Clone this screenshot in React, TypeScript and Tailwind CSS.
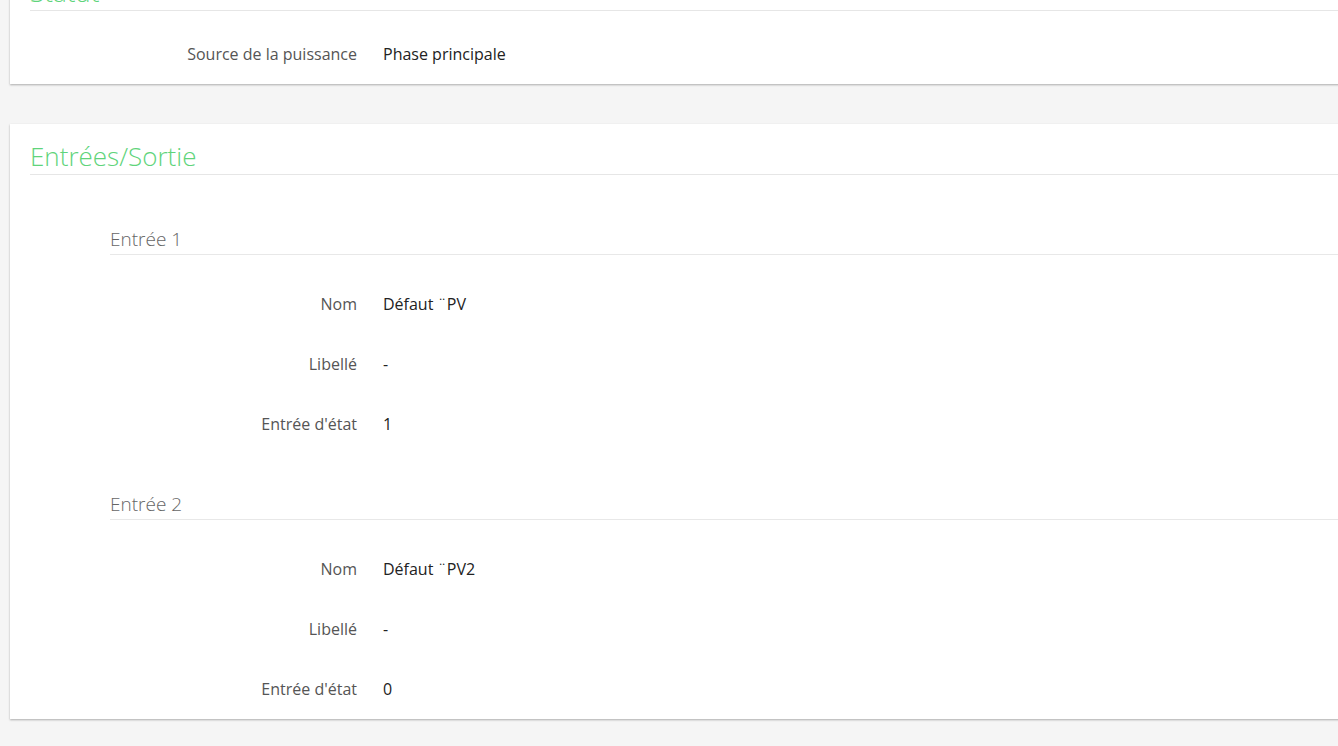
import React from "react";

const font = { fontFamily: "'Open Sans', 'Noto Sans', 'Liberation Sans', sans-serif" };

function Section({ title, rows }: { title: string; rows: [string, string][] }) {
  return (
    <div className="ml-[80px]">
      <div className="border-b border-[#e8e8e8] text-[19px] font-light leading-[29px] text-[#666]">{title}</div>
      <div className="pt-[19px]">
        {rows.map(([l, v]) => (
          <div key={l} className="flex h-[60px] items-center text-[16px]">
            <div className="w-[247px] shrink-0 text-right text-[#555]">{l}</div>
            <div className="ml-[26px] text-[#222]">{v}</div>
          </div>
        ))}
      </div>
    </div>
  );
}

export default function App() {
  return (
    <div className="min-h-[746px] overflow-hidden bg-[#f5f5f5]" style={font}>
      <div className="ml-[10px] mr-[-20px] mt-[-40px] bg-white px-[20px] shadow-[0_1px_2px_rgba(0,0,0,0.3)]">
        <div className="pt-[14px]">
          <div className="border-b border-[#e6e6e6] text-[26px] font-light leading-[36px] text-[#5fd47b]">Statut</div>
        </div>
        <div className="pt-[13px]">
          <div className="flex h-[60px] items-center text-[16px]">
            <div className="w-[327px] shrink-0 text-right text-[#555]">Source de la puissance</div>
            <div className="ml-[26px] text-[#222]">Phase principale</div>
          </div>
        </div>
      </div>

      <div className="ml-[10px] mr-[-20px] mt-[40px] bg-white px-[20px] shadow-[0_1px_2px_rgba(0,0,0,0.3)]">
        <div className="pt-[14px]">
          <div className="border-b border-[#e6e6e6] text-[26px] font-light leading-[36px] text-[#5fd47b]">Entrées/Sortie</div>
        </div>
        <div className="pt-[50px]">
          <Section
            title="Entrée 1"
            rows={[
              ["Nom", "Défaut ¨PV"],
              ["Libellé", "-"],
              ["Entrée d'état", "1"],
            ]}
          />
        </div>
        <div className="pt-[36px]">
          <Section
            title="Entrée 2"
            rows={[
              ["Nom", "Défaut ¨PV2"],
              ["Libellé", "-"],
              ["Entrée d'état", "0"],
            ]}
          />
        </div>
      </div>
    </div>
  );
}
